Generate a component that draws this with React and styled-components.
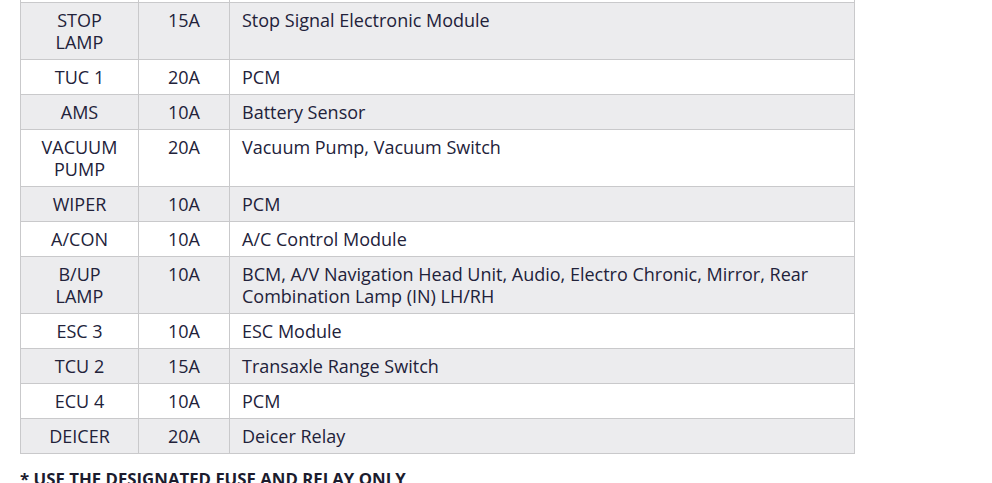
import styled, { createGlobalStyle } from "styled-components";

const GlobalStyle = createGlobalStyle`
  html, body {
    margin: 0;
    padding: 0;
    background: #fff;
    overflow: hidden;
  }
  body {
    font-family: "Open Sans", "Noto Sans", sans-serif;
    color: #1c1c2e;
  }
`;

const Page = styled.div`
  padding: 0 0 0 20px;
  width: 992px;
  height: 483px;
  box-sizing: border-box;
  overflow: hidden;
`;

const FuseTable = styled.table`
  margin-top: -33px;
  width: 835px;
  border-collapse: collapse;
  table-layout: fixed;
  font-size: 18px;
  font-weight: 400;
  line-height: 22px;
  color: #22223a;
`;

const Row = styled.tr`
  background: ${(p) => (p.$shaded ? "#ececee" : "#fff")};
`;

const Cell = styled.td`
  border: 1px solid #c9c9cb;
  padding: 6px ${(p) => (p.$left ? "12px" : "4px")} 6px;
  text-align: ${(p) => (p.$left ? "left" : "center")};
  vertical-align: top;
  height: 22px;
`;

const Note = styled.p`
  margin: 15px 0 0;
  font-family: "Open Sans", sans-serif;
  font-weight: 700;
  font-size: 16.8px;
  line-height: 20px;
  color: #1c1c2e;
`;

const fuses = [
  { name: "", amp: "", desc: "" },
  { name: "STOP\nLAMP", amp: "15A", desc: "Stop Signal Electronic Module" },
  { name: "TUC 1", amp: "20A", desc: "PCM" },
  { name: "AMS", amp: "10A", desc: "Battery Sensor" },
  { name: "VACUUM\nPUMP", amp: "20A", desc: "Vacuum Pump, Vacuum Switch" },
  { name: "WIPER", amp: "10A", desc: "PCM" },
  { name: "A/CON", amp: "10A", desc: "A/C Control Module" },
  {
    name: "B/UP\nLAMP",
    amp: "10A",
    desc: "BCM, A/V Navigation Head Unit, Audio, Electro Chronic, Mirror, Rear Combination Lamp (IN) LH/RH",
  },
  { name: "ESC 3", amp: "10A", desc: "ESC Module" },
  { name: "TCU 2", amp: "15A", desc: "Transaxle Range Switch" },
  { name: "ECU 4", amp: "10A", desc: "PCM" },
  { name: "DEICER", amp: "20A", desc: "Deicer Relay" },
];

export default function App() {
  return (
    <>
      <GlobalStyle />
      <Page>
        <FuseTable>
          <colgroup>
            <col style={{ width: 118 }} />
            <col style={{ width: 91 }} />
            <col />
          </colgroup>
          <tbody>
            {fuses.map((f, i) => (
              <Row key={i} $shaded={i % 2 === 1}>
                <Cell style={{ whiteSpace: "pre-line" }}>{f.name}</Cell>
                <Cell>{f.amp}</Cell>
                <Cell $left>{f.desc}</Cell>
              </Row>
            ))}
          </tbody>
        </FuseTable>
        <Note>* USE THE DESIGNATED FUSE AND RELAY ONLY</Note>
      </Page>
    </>
  );
}
